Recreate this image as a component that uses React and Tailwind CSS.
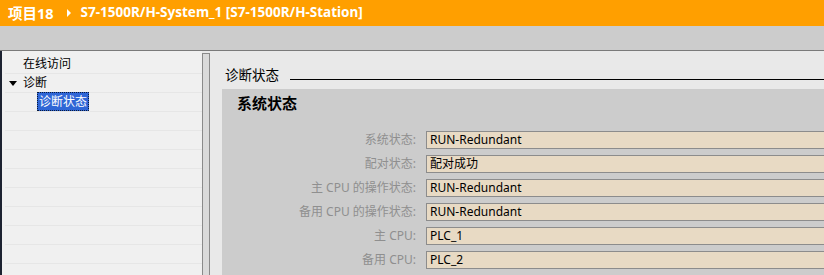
import React from "react";

const font = { fontFamily: '"Noto Sans", "Noto Sans CJK SC", sans-serif' };

const rows = [
  ["系统状态:", "RUN-Redundant"],
  ["配对状态:", "配对成功"],
  ["主 CPU 的操作状态:", "RUN-Redundant"],
  ["备用 CPU 的操作状态:", "RUN-Redundant"],
  ["主 CPU:", "PLC_1"],
  ["备用 CPU:", "PLC_2"],
];

export default function App() {
  return (
    <div className="w-[824px] h-[275px] overflow-hidden flex flex-col bg-[#e9e9e9]" style={font}>
      {/* header */}
      <div className="h-[26px] shrink-0 bg-[#ff9f00] flex items-center pl-[8px] text-white font-bold">
        <span className="text-[14.5px] leading-none">项目18</span>
        <span className="ml-[13px] mr-[10px] w-0 h-0 border-y-[4px] border-y-transparent border-l-[4px] border-l-white"></span>
        <span className="text-[13.5px] leading-none">S7-1500R/H-System_1 [S7-1500R/H-Station]</span>
      </div>
      {/* toolbar */}
      <div className="h-[25px] shrink-0 bg-[#cccccc] border-b border-[#7a7a7a]"></div>
      {/* main */}
      <div className="flex-1 flex min-h-0">
        <div className="w-[2px] bg-[#1c2231] shrink-0"></div>
        {/* left tree */}
        <div className="w-[200px] shrink-0 bg-[#f0f0f0] pt-[4px] pl-[3px] text-[12px] text-black">
          <div className="h-[19px] border-b border-[#e6e6e6] flex items-center pl-[18px]">在线访问</div>
          <div className="h-[19px] border-b border-[#e6e6e6] flex items-center pl-[4px]">
            <span className="w-0 h-0 border-x-[4px] border-x-transparent border-t-[5px] border-t-black mr-[6px]"></span>
            诊断
          </div>
          <div className="h-[19px] border-b border-[#e6e6e6] flex items-stretch pl-[32px]">
            <span className="bg-[#2f66d6] text-white px-[1px] flex items-center border border-dotted border-[#0a1a3a] -mt-[1px] h-[19px]">诊断状态</span>
          </div>
          {Array.from({ length: 8 }).map((_, i) => (
            <div key={i} className="h-[19px] border-b border-[#e6e6e6]"></div>
          ))}
        </div>
        {/* splitter */}
        <div className="w-[8px] shrink-0 bg-[#e9e9e9] pt-[2px] flex">
          <div className="flex-1 bg-[#dadada] border-x border-t border-[#8a8a8a]"></div>
        </div>
        {/* right */}
        <div className="flex-1 bg-[#e9e9e9] flex flex-col min-w-0">
          <div className="h-[38px] shrink-0 flex items-end pl-[15px] pb-[7px]">
            <span className="text-[13.5px] leading-none text-black whitespace-nowrap">诊断状态</span>
            <div className="flex-1 ml-[11px] border-b border-black mb-[2px]"></div>
          </div>
          <div className="flex-1 ml-[12px] bg-[#cccccc] pt-[5px]">
            <div className="pl-[15px] h-[18px] flex items-center text-[15px] font-bold text-black leading-none">系统状态</div>
            <div className="mt-[19px] flex flex-col gap-[6px]">
              {rows.map(([l, v]) => (
                <div key={l} className="flex items-center h-[18px]">
                  <div className="w-[194px] text-right text-[12px] text-[#8f8f8f] leading-none whitespace-nowrap">{l}</div>
                  <div className="ml-[10px] flex-1 h-[18px] bg-[#e8dac4] border-y border-l border-[#8c8c8c] flex items-center pl-[3px] text-[12px] text-black leading-none">
                    {v}
                  </div>
                </div>
              ))}
            </div>
          </div>
        </div>
      </div>
    </div>
  );
}
